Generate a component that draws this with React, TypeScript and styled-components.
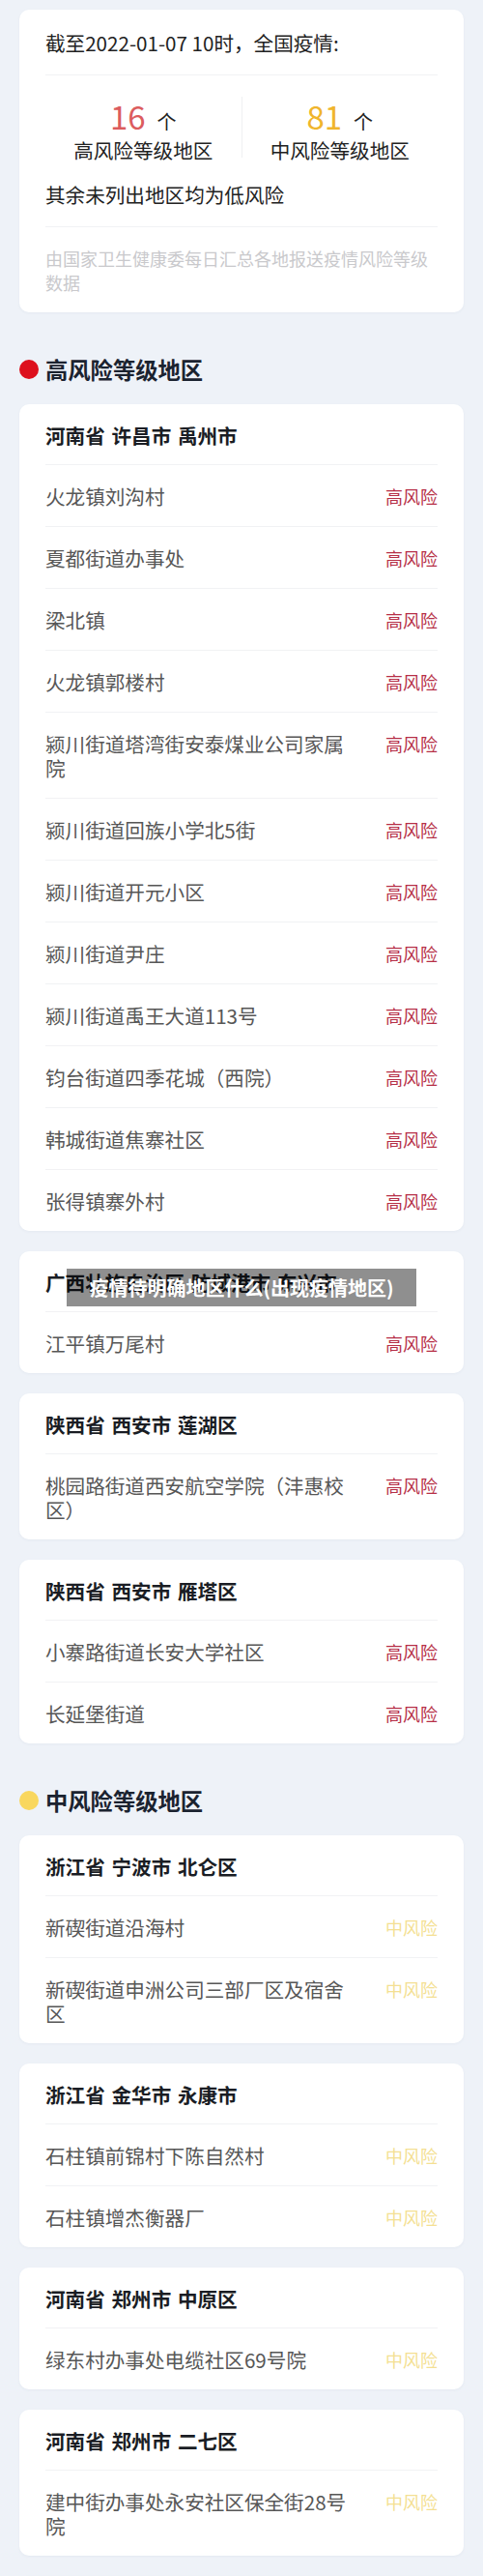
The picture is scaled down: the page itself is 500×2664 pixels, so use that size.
import React from "react";
import styled, { createGlobalStyle } from "styled-components";

const GlobalStyle = createGlobalStyle`
  body {
    margin: 0;
    background: #eef2f8;
    font-family: "Noto Sans CJK SC", "Noto Sans", sans-serif;
  }
`;

const Page = styled.div`
  display: flex;
  flex-direction: column;
  gap: 21px;
  padding: 10px 20px 40px;
  background: #eef2f8;
`;

const Card = styled.div`
  position: relative;
  padding: 0 27px;
  background: #ffffff;
  border-radius: 10px;
  box-shadow: 0 1px 3px rgba(60, 80, 120, 0.05);
`;

const SummaryCard = styled(Card)`
  padding: 22px 27px 18px;
`;

const Line = styled.div`
  font-size: 20.6px;
  line-height: 25px;
  color: #222;
`;

const Divider = styled.div`
  height: 1px;
  margin: 20px 0;
  background: #f1f2f4;
`;

const Stats = styled.div`
  display: grid;
  grid-template-columns: 1fr 1px 1fr;
  margin-bottom: 21px;
  padding-top: 2px;
`;

const StatSep = styled.div`
  margin: 0 0 5px;
  background: #eff0f2;
`;

const Stat = styled.div`
  display: flex;
  flex-direction: column;
  align-items: center;
`;

const StatValue = styled.div<{ $color: string }>`
  height: 40px;
  font-size: 33px;
  line-height: 40px;
  color: ${(p) => p.$color};

  span {
    margin-left: 12px;
    font-size: 20px;
    line-height: 1;
    color: #222;
  }
`;

const StatLabel = styled.div`
  margin-top: 2px;
  font-size: 20.6px;
  line-height: 26px;
  color: #222;
`;

const Note = styled.div`
  font-size: 18px;
  line-height: 25px;
  color: #c9c9cc;
`;

const SectionTitle = styled.h2<{ $dot: string }>`
  display: flex;
  align-items: center;
  gap: 7px;
  margin: 23px 0 0;
  font-size: 23.3px;
  line-height: 30px;
  font-weight: 700;
  color: #1b2330;

  &::before {
    content: "";
    width: 20px;
    height: 20px;
    border-radius: 50%;
    background: ${(p) => p.$dot};
  }
`;

const RegionHeader = styled.div`
  padding: 19.5px 0 17.5px;
  font-size: 20.6px;
  line-height: 25px;
  font-weight: 700;
  color: #1a1d24;
  word-spacing: 2px;
`;

const Row = styled.div`
  display: flex;
  align-items: flex-start;
  justify-content: space-between;
  padding: 19.5px 0 18.5px;
  border-top: 1px solid #f1f2f4;
`;

const Place = styled.div`
  max-width: 316px;
  font-size: 20.6px;
  line-height: 25px;
  color: #575757;
`;

const Risk = styled.div<{ $level: "high" | "mid" }>`
  flex-shrink: 0;
  font-size: 18px;
  line-height: 25px;
  color: ${(p) => (p.$level === "high" ? "#b62f47" : "#f4df93")};
`;

const Watermark = styled.div`
  position: absolute;
  top: 18px;
  left: 50%;
  transform: translateX(-50%);
  width: 362px;
  height: 39px;
  display: flex;
  align-items: center;
  justify-content: center;
  background: rgba(0, 0, 0, 0.44);
  font-size: 20px;
  font-weight: 700;
  color: #ffffff;
  white-space: nowrap;
`;

interface Region {
  name: string;
  places: string[];
  mark?: boolean;
}

const high: Region[] = [
  {
    name: "河南省 许昌市 禹州市",
    places: [
      "火龙镇刘沟村",
      "夏都街道办事处",
      "梁北镇",
      "火龙镇郭楼村",
      "颍川街道塔湾街安泰煤业公司家属院",
      "颍川街道回族小学北5街",
      "颍川街道开元小区",
      "颍川街道尹庄",
      "颍川街道禹王大道113号",
      "钧台街道四季花城（西院）",
      "韩城街道焦寨社区",
      "张得镇寨外村",
    ],
  },
  {
    name: "广西壮族自治区 防城港市 东兴市",
    places: ["江平镇万尾村"],
    mark: true,
  },
  {
    name: "陕西省 西安市 莲湖区",
    places: ["桃园路街道西安航空学院（沣惠校区）"],
  },
  {
    name: "陕西省 西安市 雁塔区",
    places: ["小寨路街道长安大学社区", "长延堡街道"],
  },
];

const mid: Region[] = [
  {
    name: "浙江省 宁波市 北仑区",
    places: ["新碶街道沿海村", "新碶街道申洲公司三部厂区及宿舍区"],
  },
  {
    name: "浙江省 金华市 永康市",
    places: ["石柱镇前锦村下陈自然村", "石柱镇增杰衡器厂"],
  },
  {
    name: "河南省 郑州市 中原区",
    places: ["绿东村办事处电缆社区69号院"],
  },
  {
    name: "河南省 郑州市 二七区",
    places: ["建中街办事处永安社区保全街28号院"],
  },
  {
    name: "河南省 郑州市 金水区",
    places: ["丰产路街道"],
  },
];

function RegionCard({ region, level }: { region: Region; level: "high" | "mid" }) {
  return (
    <Card>
      <RegionHeader>{region.name}</RegionHeader>
      {region.places.map((p) => (
        <Row key={p}>
          <Place>{p}</Place>
          <Risk $level={level}>{level === "high" ? "高风险" : "中风险"}</Risk>
        </Row>
      ))}
      {region.mark && <Watermark>疫情待明确地区什么(出现疫情地区)</Watermark>}
    </Card>
  );
}

export default function App() {
  return (
    <>
      <GlobalStyle />
      <Page>
        <SummaryCard>
          <Line>截至2022-01-07 10时，全国疫情:</Line>
          <Divider />
          <Stats>
            <Stat>
              <StatValue $color="#dc5c5e">
                16<span>个</span>
              </StatValue>
              <StatLabel>高风险等级地区</StatLabel>
            </Stat>
            <StatSep />
            <Stat>
              <StatValue $color="#f0b52c">
                81<span>个</span>
              </StatValue>
              <StatLabel>中风险等级地区</StatLabel>
            </Stat>
          </Stats>
          <Line>其余未列出地区均为低风险</Line>
          <Divider />
          <Note>由国家卫生健康委每日汇总各地报送疫情风险等级数据</Note>
        </SummaryCard>

        <SectionTitle $dot="#dd101d">高风险等级地区</SectionTitle>
        {high.map((r) => (
          <RegionCard key={r.name} region={r} level="high" />
        ))}

        <SectionTitle $dot="#f9d75e">中风险等级地区</SectionTitle>
        {mid.map((r) => (
          <RegionCard key={r.name} region={r} level="mid" />
        ))}
      </Page>
    </>
  );
}
